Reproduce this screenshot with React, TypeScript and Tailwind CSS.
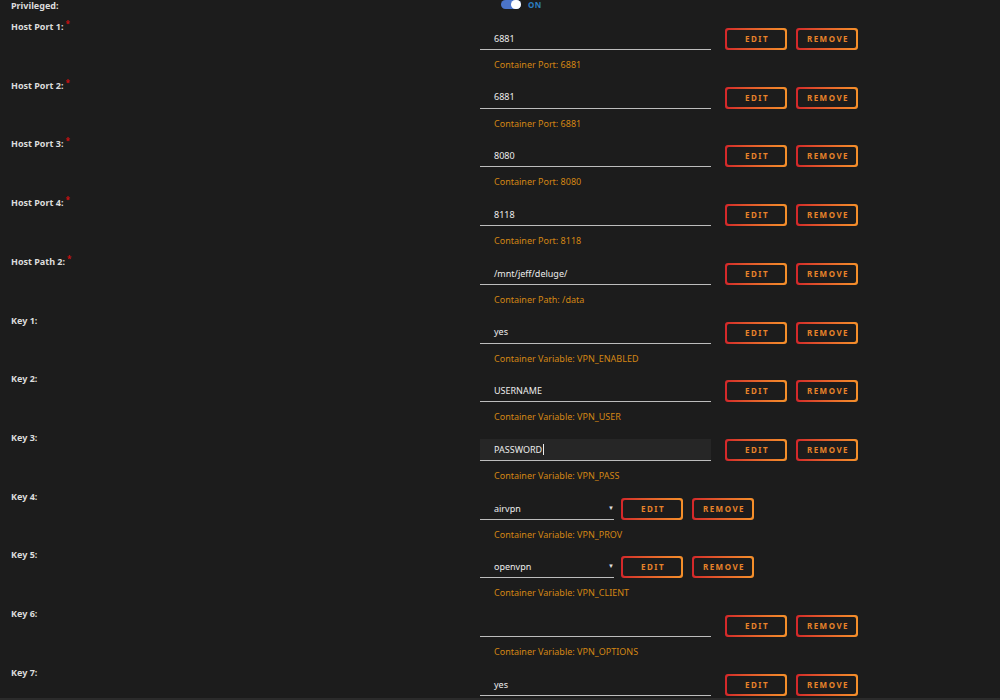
import React from "react";

type Row =
  | { label: string; req?: boolean; kind: "input"; value: string; help: string; focused?: boolean }
  | { label: string; req?: boolean; kind: "select"; value: string; help: string };

const rows: Row[] = [
  { label: "Host Port 1:", req: true, kind: "input", value: "6881", help: "Container Port: 6881" },
  { label: "Host Port 2:", req: true, kind: "input", value: "6881", help: "Container Port: 6881" },
  { label: "Host Port 3:", req: true, kind: "input", value: "8080", help: "Container Port: 8080" },
  { label: "Host Port 4:", req: true, kind: "input", value: "8118", help: "Container Port: 8118" },
  { label: "Host Path 2:", req: true, kind: "input", value: "/mnt/jeff/deluge/", help: "Container Path: /data" },
  { label: "Key 1:", kind: "input", value: "yes", help: "Container Variable: VPN_ENABLED" },
  { label: "Key 2:", kind: "input", value: "USERNAME", help: "Container Variable: VPN_USER" },
  { label: "Key 3:", kind: "input", value: "PASSWORD", help: "Container Variable: VPN_PASS", focused: true },
  { label: "Key 4:", kind: "select", value: "airvpn", help: "Container Variable: VPN_PROV" },
  { label: "Key 5:", kind: "select", value: "openvpn", help: "Container Variable: VPN_CLIENT" },
  { label: "Key 6:", kind: "input", value: "", help: "Container Variable: VPN_OPTIONS" },
  { label: "Key 7:", kind: "input", value: "yes", help: "" },
];

function GBtn({ text }: { text: string }) {
  return (
    <div className="rounded-[3px] bg-gradient-to-r from-[#d3262a] to-[#f5902a] p-[2px] w-[62px] h-[22px] shrink-0">
      <div className="w-full h-full rounded-[2px] bg-[#1c1c1c] flex items-center justify-center text-[8px] font-bold tracking-[1.5px] text-[#e8832a] pl-[2px]">
        {text}
      </div>
    </div>
  );
}

export default function App() {
  return (
    <div
      className="w-[1000px] h-[700px] overflow-hidden bg-[#1c1c1c] flex flex-col"
      style={{ fontFamily: '"Noto Sans", "Open Sans", sans-serif' }}
    >
      <div className="flex-1 overflow-hidden">
        {/* Privileged row */}
        <div className="flex h-[21px]">
          <div className="w-[480px] pl-[11px] text-[9px] font-bold text-[#dcdcdc] leading-[11px]">Privileged:</div>
          <div className="flex items-start pl-[21px]">
            <div className="w-[20px] h-[9px] rounded-full bg-[#4b74c9] relative">
              <div className="absolute right-0 top-0 w-[10px] h-[9px] rounded-full bg-white" />
            </div>
            <span className="ml-[7px] text-[8px] font-bold text-[#2c7fc0] leading-[10px] tracking-[0.5px]">ON</span>
          </div>
        </div>
        {rows.map((r, i) => (
          <div key={i} className="flex h-[58.73px]">
            <div className="w-[480px] pl-[11px] text-[9px] font-bold text-[#dcdcdc] leading-[11px] shrink-0">
              {r.label}
              {r.req && <span className="text-[#cc1010] ml-[2px] relative -top-[3px] text-[8px]">*</span>}
            </div>
            <div className="pt-[7px] flex flex-col">
              <div className="flex items-start">
                {r.kind === "input" ? (
                  <div
                    className={`w-[231px] h-[22px] border-b-[1.5px] border-[#bdbdbd] pl-[14px] flex items-center text-[9px] text-[#ececec] ${
                      r.focused ? "bg-[#262626]" : ""
                    }`}
                  >
                    {r.value}
                    {r.focused && <span className="w-[1px] h-[11px] bg-[#ececec] ml-[1px]" />}
                  </div>
                ) : (
                  <div className="w-[134px] h-[22px] border-b-[1.5px] border-[#bdbdbd] pl-[14px] pr-0 flex items-center justify-between text-[9px] text-[#ececec]">
                    <span>{r.value}</span>
                    <span className="text-[6px] text-[#e0e0e0]">▼</span>
                  </div>
                )}
                <div className={`flex gap-[9px] ${r.kind === "input" ? "ml-[14px]" : "ml-[7px]"}`}>
                  <GBtn text="EDIT" />
                  <GBtn text="REMOVE" />
                </div>
              </div>
              {r.help && (
                <div className="pl-[14px] mt-[9px] text-[9px] text-[#d38614] leading-[11px]">{r.help}</div>
              )}
            </div>
          </div>
        ))}
      </div>
      <div className="h-[2px] bg-[#2b2b2b] shrink-0" />
    </div>
  );
}
